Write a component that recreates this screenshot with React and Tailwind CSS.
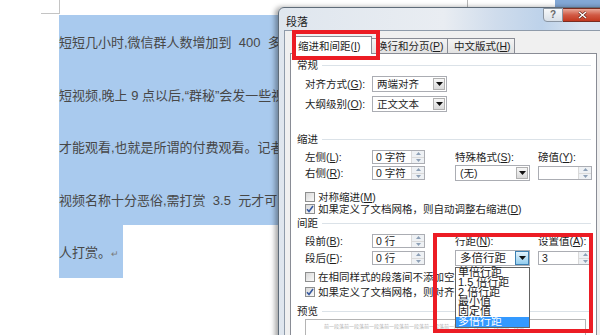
import React from "react";

const lines = [
  "短短几小时,微信群人数增加到  400  多人。进群后,群主会发",
  "短视频,晚上 9 点以后,“群秘”会发一些视频链接",
  "才能观看,也就是所谓的付费观看。记者发现",
  "视频名称十分恶俗,需打赏  3.5  元才可以观看",
];

const Ul = ({ children }) => <span className="underline underline-offset-1">{children}</span>;

const DropBtn = ({ pressed }) => (
  <div
    className={
      pressed
        ? "flex w-[14px] items-center justify-center border border-[#3c7fb1] bg-[linear-gradient(#e3f3fc,#93cdee)]"
        : "m-[1px] flex w-[12px] items-center justify-center border border-[#b0b0b0] bg-[linear-gradient(#f7f7f7,#d9d9d9)]"
    }
  >
    <svg width="7" height="4" viewBox="0 0 7 4">
      <path d="M0 0h7L3.5 4z" fill="#111" />
    </svg>
  </div>
);

const Combo = ({ text, pressed, big }) => (
  <div className="flex h-[16px] w-[75px] border border-[#abadb3] bg-white">
    <span className={big ? "flex-1 pl-[4px] text-[11.5px] leading-[14px]" : "flex-1 pl-[4px] leading-[14px]"}>{text}</span>
    <DropBtn pressed={pressed} />
  </div>
);

const Spin = ({ text, wide }) => (
  <div className={wide ? "flex h-[14px] w-[54px] border border-[#abadb3] bg-white" : "flex h-[14px] w-[53px] border border-[#abadb3] bg-white"}>
    <span className="flex-1 pl-[3px] leading-[12px]">{text}</span>
    <div className="flex w-[13px] flex-col border-l border-[#d9d9d9] bg-[#eef1f4]">
      <div className="flex flex-1 items-center justify-center border-b border-[#d9d9d9]">
        <svg width="5" height="3" viewBox="0 0 5 3">
          <path d="M2.5 0L5 3H0z" fill="#8da0b6" />
        </svg>
      </div>
      <div className="flex flex-1 items-center justify-center">
        <svg width="5" height="3" viewBox="0 0 5 3">
          <path d="M0 0h5L2.5 3z" fill="#8da0b6" />
        </svg>
      </div>
    </div>
  </div>
);

const Check = ({ checked, h, children }) => (
  <div className={`flex items-center gap-[3px] pl-[14px] ${h}`}>
    <div className="flex h-[10px] w-[10px] items-center justify-center border border-[#8e8f8f] bg-[linear-gradient(135deg,#d8d8d8,#fafafa)]">
      {checked && (
        <svg width="8" height="8" viewBox="0 0 8 8">
          <path d="M1 4.3l2 2.2L7 1" stroke="#35589f" strokeWidth="1.6" fill="none" />
        </svg>
      )}
    </div>
    <span>{children}</span>
  </div>
);

const Heading = ({ children, className = "" }) => (
  <div className={`flex items-center pl-[6px] pr-[5px] ${className}`}>
    <span className="mr-[4px]">{children}</span>
    <div className="h-px flex-1 bg-[#dbe2e8]" />
  </div>
);

const rowCls = "grid grid-cols-[67px_83px_83px_54px] items-center pl-[14px] h-[16px]";

export default function App() {
  return (
    <div className="relative h-[335px] w-[600px] overflow-hidden bg-white font-['Liberation_Sans','Noto_Sans_CJK_SC',sans-serif]">
      {/* page corner mark */}
      <div className="ml-[41px] h-[14px] w-[19px] border-b border-r border-[#c4c4c4]" />
      <div className="mt-[1px] pl-[59px] text-[13px] text-[#474747]">
        {lines.map((t) => (
          <div key={t} className="h-[52.5px] whitespace-pre bg-[#a9caee] leading-[56px]">
            {t}
          </div>
        ))}
        <div className="inline-block h-[52.5px] bg-[#a9caee] pr-[4px] align-top leading-[56px]">
          人打赏。<span className="text-[9px] text-[#7a7a7a]">↵</span>
        </div>
      </div>

      {/* window bits behind the dialog */}
      <div className="absolute left-[467px] top-0 h-[8px] w-px bg-[#b8b8b8]" />
      <div className="absolute left-[555px] top-0 h-[8px] w-[45px] bg-[#83a8d6]" />

      {/* dialog */}
      <div className="absolute left-[278px] top-[7px] z-10 flex h-[340px] w-[331px] flex-col rounded-tl-[6px] border border-[#5f6c79] bg-[linear-gradient(90deg,#dfe6ee_0%,#e9edf2_50%,#cfdcec_66%,#bdd2ea_80%,#d9e4f0_92%)] text-[10.5px] text-[#1e1e1e] shadow-[-3px_0_5px_rgba(0,0,0,0.35)]">
        <div className="flex h-[22px] shrink-0 items-start">
          <span className="ml-[7px] pt-[7px] text-[11px] leading-[14px] text-[#1a1a1a]">段落</span>
          <div className="ml-auto mr-[5px] flex">
            <div className="flex h-[14px] w-[20px] items-center justify-center rounded-bl-[4px] border border-[#8a95a2] bg-[linear-gradient(#f6f8fa,#d9e0e8)] text-[10px] font-bold leading-none text-[#6a6a6a]">
              ?
            </div>
            <div className="flex h-[14px] w-[40px] items-center justify-center rounded-br-[4px] border border-l-0 border-[#7a2c20] bg-[linear-gradient(#e9a898,#d15a44_50%,#c2391f)]">
              <svg width="9" height="8" viewBox="0 0 9 8">
                <path d="M1 1l7 6M8 1L1 7" stroke="#5a1d12" strokeWidth="2.6" />
                <path d="M1 1l7 6M8 1L1 7" stroke="#fff" strokeWidth="1.5" />
              </svg>
            </div>
          </div>
        </div>

        <div className="mx-[5px] min-h-0 flex-1 border border-[#8f9baa] bg-[#f0f0f0] px-[5px] pt-[5px] whitespace-nowrap">
          {/* tabs */}
          <div className="flex h-[17px] items-end">
            <div className="relative z-10 mb-[-1px] ml-[2px] h-[18px] w-[80px] border border-b-0 border-[#898c95] bg-white pl-[5px] leading-[18px]">
              缩进和间距(<Ul>I</Ul>)
            </div>
            <div className="h-[15px] w-[76px] border border-l-0 border-b-0 border-[#898c95] bg-[linear-gradient(#f4f4f4,#e2e2e2)] pl-[5px] leading-[15px]">
              换行和分页(<Ul>P</Ul>)
            </div>
            <div className="h-[15px] w-[67px] border border-l-0 border-b-0 border-[#898c95] bg-[linear-gradient(#f4f4f4,#e2e2e2)] pl-[6px] leading-[15px]">
              中文版式(<Ul>H</Ul>)
            </div>
          </div>

          {/* tab page */}
          <div className="h-[288px] border border-[#898c95] bg-white pt-[3px] leading-[16px]">
            <Heading className="h-[16px]">常规</Heading>
            <div className={`mt-[3px] ${rowCls}`}>
              <span>对齐方式(<Ul>G</Ul>):</span>
              <Combo text="两端对齐" />
            </div>
            <div className={`mt-[4px] ${rowCls}`}>
              <span>大纲级别(<Ul>O</Ul>):</span>
              <Combo text="正文文本" />
            </div>

            <Heading className="mt-[19px] h-[16px]">缩进</Heading>
            <div className={`mt-[2px] ${rowCls}`}>
              <span>左侧(<Ul>L</Ul>):</span>
              <Spin text="0 字符" />
              <span>特殊格式(<Ul>S</Ul>):</span>
              <span>磅值(<Ul>Y</Ul>):</span>
            </div>
            <div className={rowCls}>
              <span>右侧(<Ul>R</Ul>):</span>
              <Spin text="0 字符" />
              <Combo text="(无)" />
              <Spin text="" wide />
            </div>
            <Check h="mt-[9px] h-[13px]">对称缩进(<Ul>M</Ul>)</Check>
            <Check h="h-[12px]" checked>
              如果定义了文档网格，则自动调整右缩进(<Ul>D</Ul>)
            </Check>

            <Heading className="h-[16px]">间距</Heading>
            <div className={`mt-[2px] ${rowCls}`}>
              <span>段前(<Ul>B</Ul>):</span>
              <Spin text="0 行" />
              <span>行距(<Ul>N</Ul>):</span>
              <span>设置值(<Ul>A</Ul>):</span>
            </div>
            <div className={`mt-[1px] ${rowCls}`}>
              <span>段后(<Ul>F</Ul>):</span>
              <Spin text="0 行" />
              <div className="relative">
                <Combo text="多倍行距" pressed big />
                <div className="absolute left-0 top-[17px] z-20 w-[75px] border border-[#646464] bg-white text-[11px] leading-[9.8px]">
                  <div className="h-[9.8px] pl-[2px]">单倍行距</div>
                  <div className="h-[9.8px] pl-[2px]">1.5 倍行距</div>
                  <div className="h-[9.8px] pl-[2px]">2 倍行距</div>
                  <div className="h-[9.8px] pl-[2px]">最小值</div>
                  <div className="h-[9.8px] pl-[2px]">固定值</div>
                  <div className="h-[9.8px] bg-[#3399ff] pl-[2px] text-white">多倍行距</div>
                </div>
              </div>
              <Spin text="3" wide />
            </div>
            <Check h="mt-[4px] h-[14px]">在相同样式的段落间不添加空格(<Ul>C</Ul>)</Check>
            <Check h="mt-[1px] h-[14px]" checked>
              如果定义了文档网格，则对齐到网格(<Ul>W</Ul>)
            </Check>

            <Heading className="mt-[5px] h-[14px]">预览</Heading>
            <div className="ml-[14px] mr-[10px] mt-[1px] h-[40px] border border-[#b4b4b4] bg-white pl-[18px] pt-[3px] text-[5px] leading-[6px] text-[#b0b0b0]">
              前一段落前一段落前一段落前一段落前一段落前一段落前一段落前一段落前一段落前一段落
            </div>
          </div>
        </div>
      </div>

      {/* red annotation boxes */}
      <div className="absolute left-[292px] top-[30px] z-30 h-[30px] w-[88px] border-[4px] border-[#ec1c24]" />
      <div className="absolute left-[433px] top-[233px] z-30 h-[100px] w-[160px] border-[4px] border-[#ec1c24]" />
    </div>
  );
}
